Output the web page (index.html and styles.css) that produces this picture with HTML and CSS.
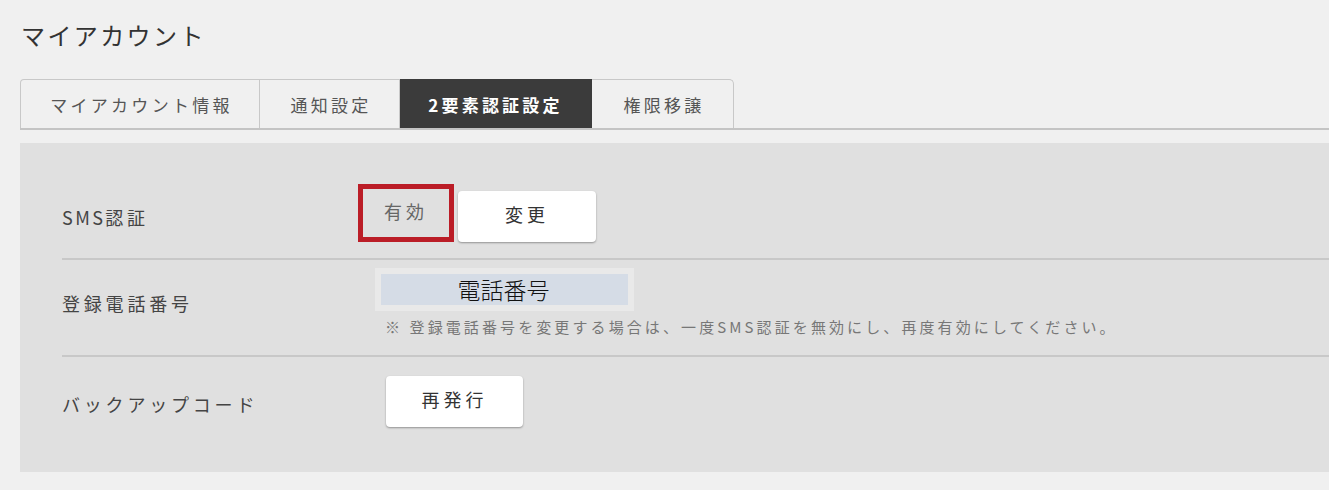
FILE: index.html
```html
<!DOCTYPE html>
<html lang="ja">
<head>
<meta charset="utf-8">
<title>マイアカウント</title>
<link rel="stylesheet" href="styles.css">
</head>
<body>
<div class="page">
  <h1 class="title">マイアカウント</h1>
  <div class="tabs">
    <div class="tab tab-first">マイアカウント情報</div>
    <div class="tab tab-second">通知設定</div>
    <div class="tab tab-active">2要素認証設定</div>
    <div class="tab tab-last">権限移譲</div>
  </div>
  <div class="panel">
    <div class="row row-sms">
      <div class="label">SMS<span class="label-kanji">認証</span></div>
      <div class="value value-sms">
        <div class="status">有効</div>
        <button class="btn btn-change">変更</button>
      </div>
    </div>
    <div class="row row-phone">
      <div class="label">登録電話番号</div>
      <div class="value value-phone">
        <div class="field"><div class="field-inner">電話番号</div></div>
        <p class="note">※ 登録電話番号を変更する場合は、一度SMS認証を無効にし、再度有効にしてください。</p>
      </div>
    </div>
    <div class="row row-backup">
      <div class="label">バックアップコード</div>
      <div class="value value-backup">
        <button class="btn btn-reissue">再発行</button>
      </div>
    </div>
  </div>
</div>
</body>
</html>
```

FILE: styles.css
```css
* { box-sizing: border-box; }
html, body {
  margin: 0;
  padding: 0;
  background: #f0f0f0;
  overflow: hidden;
}
body {
  font-family: "Noto Sans CJK JP", "Noto Sans", sans-serif;
  color: #444;
}
.page {
  padding-left: 20px;
}
.title {
  margin: 18px 0 0 1px;
  font-size: 24px;
  line-height: 34px;
  font-weight: 400;
  letter-spacing: 2.4px;
  color: #333;
}
.tabs {
  display: flex;
  margin-top: 27px;
  border-bottom: 2px solid #c4c4c4;
}
.tab {
  height: 49px;
  display: flex;
  align-items: center;
  justify-content: center;
  white-space: nowrap;
  padding-left: 3px;
  font-size: 17px;
  letter-spacing: 3.3px;
  color: #555;
  background: #f0f0f0;
  border: 1px solid #c8c8c8;
  border-bottom: none;
  border-left: none;
}
.tab-first {
  border-left: 1px solid #c8c8c8;
  border-top-left-radius: 4px;
  width: 240px;
}
.tab-second { width: 140px; }
.tab-active {
  width: 192px;
  background: #3b3b3b;
  border-color: #3b3b3b;
  color: #fff;
  font-weight: 700;
  letter-spacing: 3.2px;
  padding-left: 0;
}
.tab-last {
  width: 142px;
  border-top-right-radius: 5px;
}
.panel {
  margin-top: 13px;
  background: #e0e0e0;
  padding: 0 0 45px 42px;
}
.row {
  display: flex;
  align-items: center;
}
.row-sms {
  padding: 41px 0 16px;
  border-bottom: 2px solid #c8c8c8;
}
.row-phone {
  padding: 8px 0 18px;
  border-bottom: 2px solid #c8c8c8;
}
.row-backup {
  padding-top: 19px;
}
.label {
  width: 296px;
  flex: none;
  font-size: 18px;
  letter-spacing: 3.8px;
  color: #444;
}
.row-sms .label {
  margin-top: 8px;
  letter-spacing: 2.4px;
}
.label-kanji { letter-spacing: 3.8px; }
.row-backup .label { margin-top: 5px; }
.value-sms {
  display: flex;
  align-items: flex-end;
}
.status {
  width: 96px;
  height: 58px;
  border: 5px solid #bb1d27;
  display: flex;
  align-items: center;
  justify-content: center;
  font-size: 18px;
  letter-spacing: 4px;
  padding-left: 0;
  padding-bottom: 4px;
  color: #666;
}
.btn {
  background: #fff;
  border: none;
  border-radius: 4px;
  box-shadow: 0 1px 2px rgba(0,0,0,0.35);
  font-family: inherit;
  font-size: 18px;
  letter-spacing: 4px;
  padding: 0 0 5px 0;
  color: #333;
  height: 51px;
}
.btn-change {
  width: 138px;
  margin-left: 4px;
}
.value-backup {
  padding-left: 28px;
}
.btn-reissue {
  width: 137px;
}
.value-phone {
  display: flex;
  flex-direction: column;
}
.field {
  margin-left: 17px;
  width: 259px;
  height: 43px;
  background: #e9e9e9;
  padding: 6px;
}
.field-inner {
  height: 31px;
  background: #d5dce6;
  text-align: center;
  font-size: 23px;
  font-weight: 300;
  line-height: 31px;
  color: #111;
  padding-right: 2px;
}
.note {
  margin: 6px 0 0 27px;
  font-size: 15px;
  line-height: 20px;
  letter-spacing: 3.1px;
  color: #777;
  white-space: nowrap;
}
```
